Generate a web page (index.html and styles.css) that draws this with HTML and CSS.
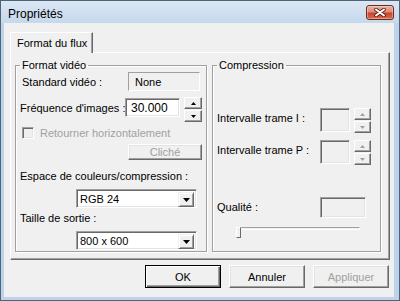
FILE: index.html
```html
<!DOCTYPE html>
<html>
<head>
  <meta charset="utf-8">
  <title>Propriétés</title>
  <link rel="stylesheet" href="styles.css">
</head>
<body>
  <div class="window">
    <div class="titlebar">
      <span class="title">Propriétés</span>
      <button class="close" type="button">
        <svg width="12" height="9" viewBox="0 0 12 9">
          <path d="M2 1.5 L10 7.5 M10 1.5 L2 7.5" stroke="#5a1c12" stroke-width="3.6" stroke-linecap="round"/>
          <path d="M2 1.5 L10 7.5 M10 1.5 L2 7.5" stroke="#fff" stroke-width="2" stroke-linecap="round"/>
        </svg>
      </button>
    </div>

    <div class="client">
      <div class="tabs">
        <div class="tab">Format du flux</div>
      </div>

      <div class="panel">
        <fieldset class="group group-video">
          <legend>Format vidéo</legend>

          <div class="row row-standard">
            <span class="lbl lbl-standard">Standard vidéo :</span>
            <span class="static">None</span>
          </div>

          <div class="row row-freq">
            <span class="lbl lbl-freq">Fréquence d'images :</span>
            <span class="edit edit-freq">30.000</span>
            <span class="spin">
              <button class="spin-btn" type="button"><svg width="5" height="3"><polygon points="2.5,0 5,3 0,3" fill="#000"/></svg></button>
              <button class="spin-btn" type="button"><svg width="5" height="3"><polygon points="0,0 5,0 2.5,3" fill="#000"/></svg></button>
            </span>
          </div>

          <label class="check">
            <span class="check-box"></span>
            <span>Retourner horizontalement</span>
          </label>

          <div class="row row-snap">
            <button class="btn btn-snap" type="button" disabled>Cliché</button>
          </div>

          <div class="line lbl-space">Espace de couleurs/compression :</div>
          <div class="combo">
            <span class="combo-text">RGB 24</span>
            <span class="combo-drop"><svg width="7" height="4"><polygon points="0,0 7,0 3.5,4" fill="#000"/></svg></span>
          </div>

          <div class="line lbl-size">Taille de sortie :</div>
          <div class="combo">
            <span class="combo-text">800 x 600</span>
            <span class="combo-drop"><svg width="7" height="4"><polygon points="0,0 7,0 3.5,4" fill="#000"/></svg></span>
          </div>
        </fieldset>

        <fieldset class="group group-comp">
          <legend>Compression</legend>

          <div class="row row-iframe">
            <span class="lbl lbl-comp">Intervalle trame I :</span>
            <span class="edit edit-off edit-small"></span>
            <span class="spin spin-off">
              <button class="spin-btn" type="button" disabled><svg width="5" height="3"><polygon points="2.5,0 5,3 0,3" fill="#a0a0a0"/></svg></button>
              <button class="spin-btn" type="button" disabled><svg width="5" height="3"><polygon points="0,0 5,0 2.5,3" fill="#a0a0a0"/></svg></button>
            </span>
          </div>

          <div class="row row-pframe">
            <span class="lbl lbl-comp">Intervalle trame P :</span>
            <span class="edit edit-off edit-small"></span>
            <span class="spin spin-off">
              <button class="spin-btn" type="button" disabled><svg width="5" height="3"><polygon points="2.5,0 5,3 0,3" fill="#a0a0a0"/></svg></button>
              <button class="spin-btn" type="button" disabled><svg width="5" height="3"><polygon points="0,0 5,0 2.5,3" fill="#a0a0a0"/></svg></button>
            </span>
          </div>

          <div class="row row-quality">
            <span class="lbl lbl-comp">Qualité :</span>
            <span class="edit edit-off edit-quality"></span>
          </div>

          <div class="slider">
            <span class="track"></span>
            <span class="thumb"></span>
          </div>
        </fieldset>
      </div>

      <div class="footer">
        <button class="btn btn-default" type="button">OK</button>
        <button class="btn" type="button">Annuler</button>
        <button class="btn" type="button" disabled>Appliquer</button>
      </div>
    </div>
  </div>
</body>
</html>
```

FILE: styles.css
```css
body {
  margin: 0;
  font-family: "Liberation Sans", Arial, sans-serif;
  font-size: 11px;
  color: #000;
}
button {
  font-family: inherit;
  font-size: inherit;
  padding: 0;
  margin: 0;
  color: #000;
}

/* cadre de la fenetre */
.window {
  width: 400px;
  height: 301px;
  box-sizing: border-box;
  border: 1px solid #4f6478;
  background: #bcd3ea;
  padding: 0 5px 3px 3px;
  display: flex;
  flex-direction: column;
}
.titlebar {
  height: 22px;
  margin: 0 -5px 0 -3px;
  padding: 0 5px 0 7px;
  background: linear-gradient(#dbe7f4, #c5d8ec);
  display: flex;
  justify-content: space-between;
  align-items: flex-start;
}
.title {
  font-size: 12px;
  line-height: 14px;
  margin-top: 6px;
}
.close {
  width: 28px;
  height: 15px;
  margin-top: 4px;
  border: 1px solid #6b2a1f;
  border-radius: 3px;
  background: linear-gradient(#eab1a4 0%, #dc8b79 45%, #c8452c 55%, #d96a4f 100%);
  box-shadow: inset 0 0 0 1px rgba(255, 255, 255, 0.35);
  display: flex;
  align-items: center;
  justify-content: center;
}
.close svg {
  display: block;
}

/* zone client */
.client {
  flex: 1;
  background: #f0f0f0;
  padding: 9px 0 0 6px;
  display: flex;
  flex-direction: column;
}
.tabs {
  display: flex;
  height: 20px;
}
.tab {
  position: relative;
  z-index: 1;
  width: 83px;
  height: 21px;
  box-sizing: border-box;
  padding: 3px 0 0 6px;
  background: #f0f0f0;
  border: 1px solid;
  border-color: #fff #696969 transparent #fff;
  border-bottom: none;
  box-shadow: inset -1px 0 #a0a0a0;
  font-size: 11px;
  line-height: 14px;
}
.panel {
  width: 380px;
  height: 208px;
  box-sizing: border-box;
  border: 1px solid;
  border-color: #fff #696969 #696969 #fff;
  box-shadow: inset -1px -1px #a0a0a0;
  padding: 6px 0 0 4px;
  display: flex;
  gap: 5px;
  align-items: flex-start;
}

/* cadres de groupe */
.group {
  margin: 0;
  padding: 0 4px;
  min-width: 0;
  height: 193px;
  box-sizing: border-box;
  border: 1px solid #a0a0a0;
  box-shadow: inset 1px 1px #fff, 1px 1px #fff;
}
.group legend {
  padding: 0 2px;
  line-height: 12px;
}
.group-video {
  width: 192px;
}
.group-comp {
  width: 169px;
}

.row {
  display: flex;
  align-items: flex-start;
}
.lbl {
  line-height: 12px;
  white-space: nowrap;
}
.line {
  line-height: 12px;
}

/* controles 3D */
.static {
  width: 72px;
  height: 19px;
  box-sizing: border-box;
  border: 1px solid;
  border-color: #a0a0a0 #fff #fff #a0a0a0;
  padding: 2px 0 0 6px;
  line-height: 14px;
}
.edit {
  box-sizing: border-box;
  border: 1px solid;
  border-color: #a0a0a0 #fff #fff #a0a0a0;
  box-shadow: inset 1px 1px #696969, inset -1px -1px #e3e3e3;
  background: #fff;
  line-height: 14px;
}
.edit-off {
  background: #f0f0f0;
}
.spin {
  display: flex;
  flex-direction: column;
  gap: 1px;
}
.spin-btn {
  height: 12px;
  box-sizing: border-box;
  background: #f0f0f0;
  border: 1px solid;
  border-color: #fff #696969 #696969 #fff;
  box-shadow: inset -1px -1px #a0a0a0;
  display: flex;
  align-items: center;
  justify-content: center;
}
.spin-btn svg {
  display: block;
}
.btn {
  width: 76px;
  height: 23px;
  box-sizing: border-box;
  background: #f0f0f0;
  border: 1px solid;
  border-color: #fff #696969 #696969 #fff;
  box-shadow: inset -1px -1px #a0a0a0, inset 1px 1px #e3e3e3;
}
.btn:disabled {
  color: #a0a0a0;
}
.btn-default {
  border-color: #000;
  box-shadow: inset 1px 1px #fff, inset -1px -1px #696969, inset -2px -2px #a0a0a0;
}

/* groupe format video */
.row-standard {
  margin-top: 1px;
}
.lbl-standard {
  width: 106px;
  margin: 4px 0 0 2px;
}
.row-freq {
  margin-top: 6px;
}
.lbl-freq {
  width: 105px;
  margin-top: 5px;
}
.edit-freq {
  width: 55px;
  height: 19px;
  margin-top: 1px;
  padding: 2px 0 0 5px;
  font-size: 12px;
}
.row-freq .spin {
  margin-left: 4px;
}
.row-freq .spin-btn {
  width: 18px;
}
.check {
  display: flex;
  align-items: center;
  gap: 6px;
  margin: 4px 0 0 2px;
  height: 13px;
  color: #a0a0a0;
}
.check-box {
  width: 12px;
  height: 12px;
  box-sizing: border-box;
  border: 1px solid;
  border-color: #a0a0a0 #fff #fff #a0a0a0;
  box-shadow: inset 1px 1px #696969, inset -1px -1px #e3e3e3;
  background: #f0f0f0;
}
.row-snap {
  margin: 5px 0 0 108px;
}
.btn-snap {
  width: 74px;
  height: 16px;
}
.lbl-space {
  margin-top: 10px;
}
.lbl-size {
  margin-top: 4px;
}
.combo {
  margin: 7px 0 0 56px;
  width: 121px;
  height: 19px;
  box-sizing: border-box;
  border: 1px solid;
  border-color: #a0a0a0 #fff #fff #a0a0a0;
  box-shadow: inset 1px 1px #696969, inset -1px -1px #e3e3e3;
  background: #fff;
  padding: 2px 2px 2px 3px;
  display: flex;
  justify-content: space-between;
}
.combo-text {
  line-height: 13px;
  margin-top: 1px;
}
.combo-drop {
  width: 16px;
  height: 15px;
  box-sizing: border-box;
  background: #f0f0f0;
  border: 1px solid;
  border-color: #f0f0f0 #696969 #696969 #f0f0f0;
  box-shadow: inset 1px 1px #fff, inset -1px -1px #a0a0a0;
  display: flex;
  align-items: center;
  justify-content: center;
}
.combo-drop svg {
  display: block;
}

/* groupe compression */
.lbl-comp {
  width: 103px;
  margin-top: 4px;
}
.row-iframe {
  margin-top: 37px;
}
.row-pframe {
  margin-top: 7px;
}
.edit-small {
  width: 30px;
  height: 24px;
}
.spin-off {
  margin-left: 4px;
}
.spin-off .spin-btn {
  width: 17px;
}
.row-quality {
  margin-top: 32px;
}
.edit-quality {
  width: 46px;
  height: 21px;
}
.slider {
  position: relative;
  width: 124px;
  height: 11px;
  margin: 9px 0 0 19px;
}
.track {
  display: block;
  margin-top: 4px;
  height: 3px;
  box-sizing: border-box;
  border: 1px solid;
  border-color: #a0a0a0 #fff #fff #a0a0a0;
}
.thumb {
  position: absolute;
  left: 0;
  top: 0;
  width: 5px;
  height: 11px;
  box-sizing: border-box;
  background: #f0f0f0;
  border: 1px solid;
  border-color: #fff #696969 #696969 #fff;
}

/* boutons du bas */
.footer {
  display: flex;
  justify-content: flex-end;
  gap: 8px;
  margin: 5px 5px 0 0;
}
```
